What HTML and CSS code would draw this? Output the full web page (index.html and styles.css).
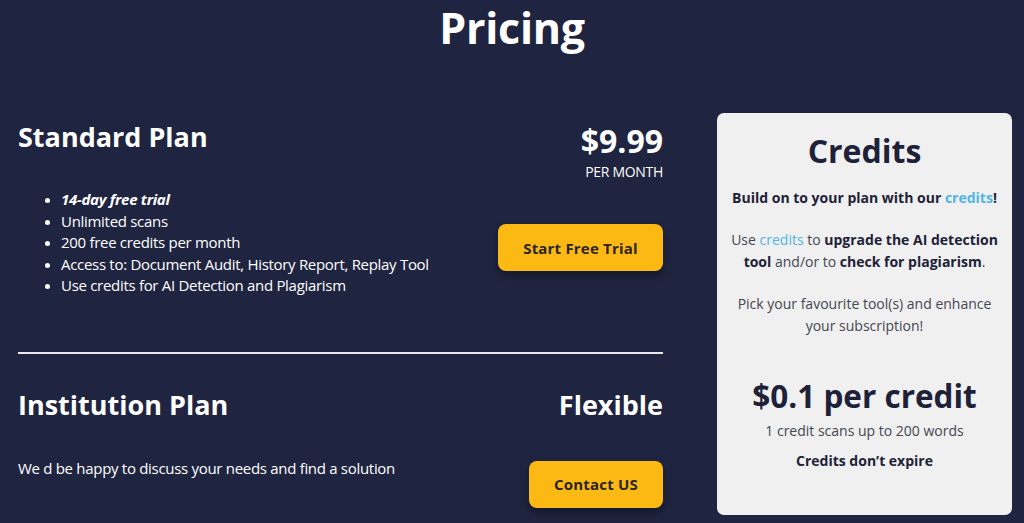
FILE: index.html
```html
<!DOCTYPE html>
<html lang="en">
<head>
<meta charset="utf-8">
<title>Pricing</title>
<link rel="stylesheet" href="styles.css">
</head>
<body>
<h1 class="page-title">Pricing</h1>
<main class="layout">
  <section class="plans">
    <div class="plan plan-standard">
      <div class="plan-info">
        <h2 class="plan-name">Standard Plan</h2>
        <ul class="features">
          <li><strong><em>14-day free trial</em></strong></li>
          <li>Unlimited scans</li>
          <li>200 free credits per month</li>
          <li>Access to: Document Audit, History Report, Replay Tool</li>
          <li>Use credits for AI Detection and Plagiarism</li>
        </ul>
      </div>
      <div class="plan-side">
        <div class="price">$9.99</div>
        <div class="period">PER MONTH</div>
        <a class="btn btn-trial" href="#">Start Free Trial</a>
      </div>
    </div>
    <hr class="divider">
    <div class="plan plan-institution">
      <div class="plan-info">
        <h2 class="plan-name">Institution Plan</h2>
        <p class="plan-desc">We d be happy to discuss your needs and find a solution</p>
      </div>
      <div class="plan-side">
        <div class="flex-price">Flexible</div>
        <a class="btn btn-contact" href="#">Contact US</a>
      </div>
    </div>
  </section>
  <aside class="credits-card">
    <h2 class="credits-title">Credits</h2>
    <p class="credits-text first"><strong>Build on to your plan with our <span class="link">credits</span>!</strong></p>
    <p class="credits-text">Use <span class="link">credits</span> to <strong>upgrade the AI detection tool</strong> and/or to <strong>check for plagiarism</strong>.</p>
    <p class="credits-text">Pick your favourite tool(s) and enhance your subscription!</p>
    <div class="credit-price">$0.1 per credit</div>
    <p class="credit-note">1 credit scans up to 200 words</p>
    <p class="credit-note strong">Credits don’t expire</p>
  </aside>
</main>
</body>
</html>
```

FILE: styles.css
```css
* { box-sizing: border-box; }
html, body { margin: 0; padding: 0; }
body {
  background: #1f2440;
  color: #ffffff;
  font-family: "Open Sans", "Noto Sans", sans-serif;
  width: 1024px;
  height: 523px;
  overflow: hidden;
}
.page-title {
  margin: 0;
  text-align: center;
  font-size: 43px;
  font-weight: 700;
  line-height: 56px;
  letter-spacing: -0.3px;
}
.layout {
  display: flex;
  align-items: flex-start;
  gap: 54px;
  padding: 57px 12px 0 18px;
}
.plans {
  width: 645px;
  flex: none;
}
.plan {
  display: flex;
  justify-content: space-between;
}
.plan-info { flex: 1; }
.plan-name {
  margin: 0;
  font-size: 27px;
  font-weight: 700;
  line-height: 36px;
  padding-top: 6px;
}
.features {
  margin: 34px 0 0;
  padding-left: 43px;
  font-size: 15px;
  line-height: 21.5px;
  letter-spacing: -0.3px;
}
.features li::marker { font-size: 13px; }
.plan-side {
  display: flex;
  flex-direction: column;
  align-items: flex-end;
}
.price {
  font-size: 32px;
  font-weight: 700;
  line-height: 40px;
  padding-top: 8px;
}
.period {
  font-size: 14px;
  line-height: 20px;
  letter-spacing: -0.3px;
  margin-top: 1px;
}
.btn {
  display: flex;
  align-items: center;
  justify-content: center;
  height: 47px;
  background: #fdb913;
  color: #2a2520;
  font-weight: 700;
  font-size: 15px;
  text-decoration: none;
  border-radius: 8px;
  box-shadow: 0 5px 10px rgba(0, 0, 0, 0.35);
  letter-spacing: 0.2px;
}
.btn-trial { width: 165px; margin-top: 42px; }
.btn-contact { width: 134px; margin-top: 38px; }
.divider {
  border: 0;
  height: 2px;
  background: #e8e8ee;
  margin: 55px 0 0;
}
.plan-institution { margin-top: 27px; }
.flex-price {
  font-size: 27px;
  font-weight: 700;
  line-height: 36px;
  padding-top: 6px;
}
.plan-desc {
  margin: 34px 0 0;
  font-size: 15px;
  line-height: 22px;
  letter-spacing: -0.3px;
}
.credits-card {
  width: 295px;
  flex: none;
  height: 402px;
  background: #f0f0f0;
  border-radius: 7px;
  color: #1e2238;
  text-align: center;
  padding: 16px 14px 0;
}
.credits-title {
  margin: 0;
  font-size: 32px;
  font-weight: 700;
  line-height: 44px;
}
.credits-text {
  margin: 20px 0 0;
  font-size: 14px;
  line-height: 22px;
  color: #444650;
}
.credits-text strong { color: #1e2238; }
.credits-text.first { margin-top: 14px; }
.link { color: #4fb5e6; }
.credit-price {
  margin-top: 39px;
  font-size: 31.5px;
  font-weight: 700;
  line-height: 40px;
}
.credit-note {
  margin: 4px 0 0;
  font-size: 14px;
  line-height: 22px;
  color: #444650;
}
.credit-note.strong {
  margin-top: 8px;
  font-weight: 700;
  color: #1e2238;
}
```
